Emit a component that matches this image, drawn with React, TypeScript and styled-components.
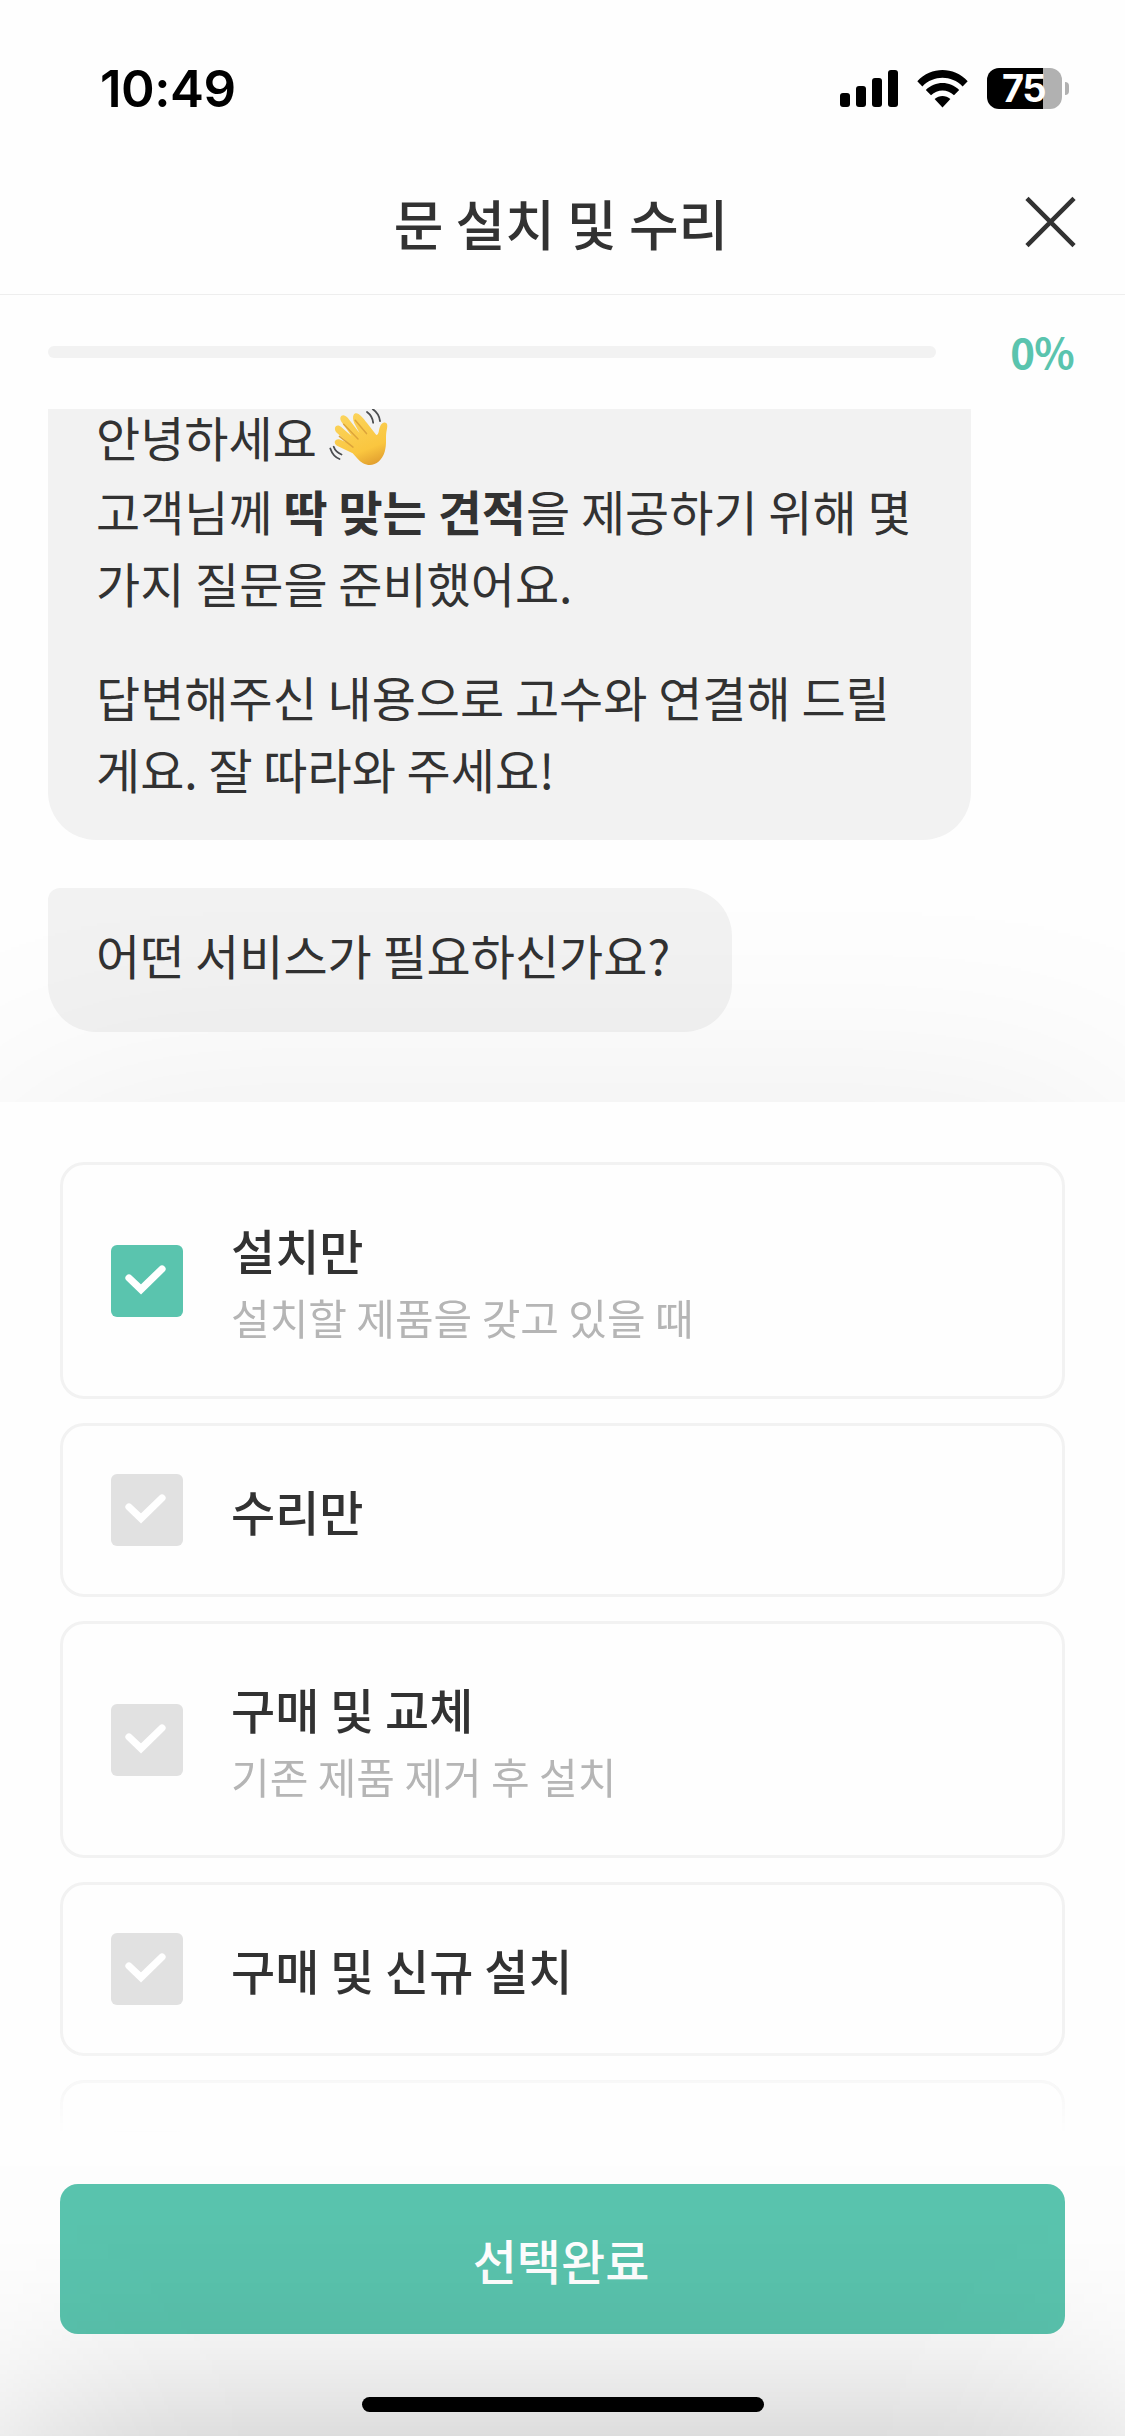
import React, { useState } from "react";
import styled, { createGlobalStyle } from "styled-components";

const MINT = "#5ac4ae";
const INK = "#323232";
const LINE = "#f2f2f2";

const GlobalStyle = createGlobalStyle`
  * { box-sizing: border-box; }
  body { margin: 0; background: #fff; }
  p { margin: 0; }
  button { font: inherit; border: 0; padding: 0; background: none; cursor: pointer; }
`;

const Screen = styled.div`
  position: relative;
  display: flex;
  flex-direction: column;
  width: 1125px;
  height: 2436px;
  overflow: hidden;
  background: #fefefe;
  color: ${INK};
  font-family: "Noto Sans CJK KR", "Noto Sans", sans-serif;
`;

const StatusBar = styled.div`
  display: flex;
  align-items: center;
  justify-content: space-between;
  height: 153px;
  padding: 24px 56px 0 100px;
  color: #000;
`;

const Clock = styled.time`
  font: 600 51px/60px Inter, sans-serif;
  letter-spacing: -0.5px;
`;

const StatusIcons = styled.div`
  display: flex;
  align-items: center;
`;

const Signal = styled.svg`
  width: 58px;
  height: 37px;
  margin-right: 19px;
`;

const Wifi = styled.svg`
  width: 51px;
  height: 38px;
  margin-right: 19px;
`;

const Battery = styled.div`
  display: flex;
  align-items: center;
  justify-content: center;
  width: 75px;
  height: 41px;
  padding-right: 2px;
  border-radius: 12px;
  background: linear-gradient(90deg, #000 56px, #b1b1b1 56px);
  color: #fff;
  font: 700 38px/41px Inter, sans-serif;
  letter-spacing: -1.6px;
`;

const BatteryNub = styled.div`
  width: 4px;
  height: 13px;
  margin-left: 3px;
  border-radius: 0 5px 5px 0;
  background: #b1b1b1;
`;

const Header = styled.header`
  display: grid;
  grid-template-columns: 100px 1fr 100px;
  align-items: center;
  height: 142px;
  margin-bottom: 1px;
  border-bottom: 1px solid #eeeeee;
`;

const Title = styled.h1`
  grid-column: 2;
  margin: 0;
  padding: 0 3px 2px 0;
  text-align: center;
  font-size: 54px;
  font-weight: 500;
  line-height: 80px;
`;

const CloseButton = styled.button`
  display: flex;
  justify-content: flex-end;
  padding: 0 49px 3px 0;
  svg { width: 52px; height: 52px; }
`;

const ProgressRow = styled.div`
  display: flex;
  align-items: center;
  justify-content: space-between;
  height: 113px;
  padding: 0 51px 2px 48px;
`;

const Track = styled.div`
  width: 888px;
  height: 12px;
  border-radius: 6px;
  background: #f2f2f2;
`;

const Percent = styled.span`
  padding-bottom: 2px;
  color: ${MINT};
  font-size: 42px;
  font-weight: 700;
  letter-spacing: -0.8px;
  line-height: 60px;
`;

const Chat = styled.section`
  display: flex;
  flex-direction: column;
  justify-content: flex-end;
  align-items: flex-start;
  gap: 48px;
  height: 693px;
  padding: 0 48px 70px;
  overflow: hidden;
`;

const Bubble = styled.div<{ $width: number; $pad: string }>`
  width: ${(p) => p.$width}px;
  flex: none;
  padding: ${(p) => p.$pad};
  border-radius: 12px 48px 48px 48px;
  background: #f2f2f2;
  font-size: 48px;
  line-height: 72px;
  white-space: nowrap;
  b { font-weight: 700; }
  p + p { margin-top: 42px; }
`;

const Greeting = styled.span`
  display: flex;
  align-items: center;
  height: 76px;
  gap: 12px;
`;

const Wave = styled.svg`
  width: 62px;
  height: 60px;
  margin-top: 3px;
`;

const Sheet = styled.section`
  position: relative;
  display: flex;
  flex-direction: column;
  height: 1334px;
  padding: 60px 60px 0;
  background: #fefefe;
  box-shadow: 0 0 230px rgba(0, 0, 0, 0.07);
`;

const OptionList = styled.div`
  display: flex;
  flex-direction: column;
  gap: 24px;
  height: 974px;
  overflow: hidden;
  mask-image: linear-gradient(#000 880px, transparent 972px);
`;

const Option = styled.label<{ $tall: boolean }>`
  display: flex;
  flex: none;
  align-items: center;
  gap: 48px;
  height: ${(p) => (p.$tall ? 237 : 174)}px;
  padding: 0 48px;
  border: 3px solid ${LINE};
  border-radius: 24px;
  cursor: pointer;
`;

const HiddenInput = styled.input`
  appearance: none;
  position: absolute;
  margin: 0;
`;

const CheckBox = styled.span<{ $on: boolean }>`
  display: flex;
  width: 72px;
  height: 72px;
  border-radius: 6px;
  background: ${(p) => (p.$on ? MINT : "#e1e1e1")};
`;

const OptionText = styled.span`
  display: flex;
  flex-direction: column;
`;

const OptionTitle = styled.span`
  font-size: 48px;
  font-weight: 500;
  line-height: 72px;
`;

const OptionNote = styled.span`
  color: #b5b5b5;
  font-size: 42px;
  line-height: 63px;
`;

const Submit = styled.button`
  && {
    height: 150px;
    margin-top: 48px;
    padding-right: 3px;
    border-radius: 18px;
    background: ${MINT};
    color: #fff;
    font-size: 48px;
    font-weight: 500;
    line-height: 72px;
  }
`;

const HomeIndicator = styled.div`
  position: relative;
  z-index: 2;
  align-self: center;
  width: 402px;
  height: 15px;
  margin-top: 63px;
  border-radius: 8px;
  background: #000;
`;

const BottomShade = styled.div`
  position: absolute;
  z-index: 1;
  left: 0;
  right: 0;
  bottom: 0;
  height: 340px;
  background: linear-gradient(
    to top,
    rgba(0, 0, 0, 0.13) 0,
    rgba(0, 0, 0, 0.096) 37px,
    rgba(0, 0, 0, 0.064) 73px,
    rgba(0, 0, 0, 0.038) 110px,
    rgba(0, 0, 0, 0.022) 147px,
    rgba(0, 0, 0, 0.012) 183px,
    rgba(0, 0, 0, 0.005) 220px,
    transparent 320px
  );
  mask-image: linear-gradient(
    90deg,
    rgba(0, 0, 0, 0.5) 0,
    rgba(0, 0, 0, 0.69) 55px,
    rgba(0, 0, 0, 0.84) 110px,
    rgba(0, 0, 0, 0.94) 165px,
    #000 260px,
    #000 865px,
    rgba(0, 0, 0, 0.94) 960px,
    rgba(0, 0, 0, 0.84) 1015px,
    rgba(0, 0, 0, 0.69) 1070px,
    rgba(0, 0, 0, 0.5) 1125px
  );
  pointer-events: none;
`;

const options = [
  { title: "설치만", note: "설치할 제품을 갖고 있을 때" },
  { title: "수리만" },
  { title: "구매 및 교체", note: "기존 제품 제거 후 설치" },
  { title: "구매 및 신규 설치" },
  { title: "" },
];

function SignalIcon() {
  return (
    <Signal viewBox="0 0 58 37">
      <rect x="0" y="23" width="10" height="14" rx="3" />
      <rect x="16" y="16" width="10" height="21" rx="3" />
      <rect x="32" y="8" width="10" height="29" rx="3" />
      <rect x="48" y="0" width="10" height="37" rx="3" />
    </Signal>
  );
}

function WifiIcon() {
  return (
    <Wifi viewBox="0 0 51 38">
      <path d="M0.3 11.2C14.5-3.7 36.5-3.7 50.7 11.2L45.6 16.4C34.3 4.9 16.7 4.9 5.4 16.4Z" />
      <path d="M8.8 20C18.3 10.7 32.7 10.7 42.2 20L37 25.2C30.5 18.8 20.5 18.8 14 25.2Z" />
      <path d="M17.6 29C22.2 24.9 28.8 24.9 33.4 29L25.5 37.4Z" />
    </Wifi>
  );
}

function WaveIcon() {
  return (
    <Wave viewBox="0 0 62 60" role="img" aria-label="손 흔들기" fill="none" strokeLinecap="round">
      <defs>
        <linearGradient id="skin" x1="20" y1="5" x2="42" y2="60" gradientUnits="userSpaceOnUse">
          <stop offset="0" stopColor="#fbd35a" />
          <stop offset="0.65" stopColor="#fac63f" />
          <stop offset="1" stopColor="#dc962b" />
        </linearGradient>
      </defs>
      <path
        d="M26.3 4.1C29-0.1 34.5 5.6 39.5 12.5L48 23.5Q50 26 51.2 21.5C52.2 15.3 54.5 11.2 58 12.3C61.1 13.2 59.4 18 58.7 23C58.1 28 59.4 34 57.2 41.2C53.8 52.2 44.6 57.5 35.5 52.7C31.5 50.6 28 45.8 25.2 42.8L9.5 35.2C5.4 32.6 7.3 27.7 12.4 29L20.8 32.6L9.8 22.8C4.9 18.1 8.5 12.2 13.5 16.2L24 25.4L14.4 12C10 5.6 15.9 1.8 20.2 7.3L32 22.4L26.8 12.7C25.5 9.5 24.9 6.4 26.3 4.1Z"
        transform="translate(-1.5 2.5)"
        fill="url(#skin)"
      />
      <path
        d="M26.2 12.2L37.5 25.6M14.7 16.3L29 31M10.4 28.4L24 39.1"
        stroke="#dda43a"
        strokeWidth="1.5"
      />
      <path d="M38 4Q43.5 8 44.2 14.8M43.8 1.2Q50.2 5.5 51 13.1M4.7 38.8Q6.5 44 12.5 46.5M1.3 40.5Q4 48.5 10.5 51" stroke="#4b4d50" strokeWidth="1.8" />
    </Wave>
  );
}

export default function App() {
  const [selected, setSelected] = useState<number[]>([0]);
  const toggle = (i: number) =>
    setSelected((s) => (s.includes(i) ? s.filter((n) => n !== i) : [...s, i]));

  return (
    <Screen>
      <GlobalStyle />
      <StatusBar>
        <Clock>10:49</Clock>
        <StatusIcons>
          <SignalIcon />
          <WifiIcon />
          <Battery>75</Battery>
          <BatteryNub />
        </StatusIcons>
      </StatusBar>

      <Header>
        <Title>문 설치 및 수리</Title>
        <CloseButton aria-label="닫기">
          <svg viewBox="0 0 52 52" stroke={INK} strokeWidth="4.6" fill="none">
            <path d="M2 2L50 50M50 2L2 50" />
          </svg>
        </CloseButton>
      </Header>

      <ProgressRow>
        <Track />
        <Percent>0%</Percent>
      </ProgressRow>

      <Chat>
        <Bubble $width={923} $pad="33px 48px 36px">
          <p>
            <Greeting>
              안녕하세요
              <WaveIcon />
            </Greeting>
            고객님께 <b>딱 맞는 견적</b>을 제공하기 위해 몇<br />
            가지 질문을 준비했어요.
          </p>
          <p>
            답변해주신 내용으로 고수와 연결해 드릴<br />
            게요. 잘 따라와 주세요!
          </p>
        </Bubble>
        <Bubble $width={684} $pad="30px 48px 42px">
          <p>어떤 서비스가 필요하신가요?</p>
        </Bubble>
      </Chat>

      <Sheet>
        <OptionList>
          {options.map((o, i) => {
            const on = selected.includes(i);
            return (
              <Option key={i} $tall={!!o.note}>
                <HiddenInput type="checkbox" checked={on} onChange={() => toggle(i)} />
                <CheckBox $on={on}>
                  <svg viewBox="0 0 72 72" fill="none" stroke="#fff" strokeWidth="7.2" strokeLinecap="round">
                    <path d="M18 33L30 44.4L51 24" />
                  </svg>
                </CheckBox>
                <OptionText>
                  <OptionTitle>{o.title}</OptionTitle>
                  {o.note && <OptionNote>{o.note}</OptionNote>}
                </OptionText>
              </Option>
            );
          })}
        </OptionList>
        <Submit>선택완료</Submit>
        <HomeIndicator />
      </Sheet>
      <BottomShade />
    </Screen>
  );
}
